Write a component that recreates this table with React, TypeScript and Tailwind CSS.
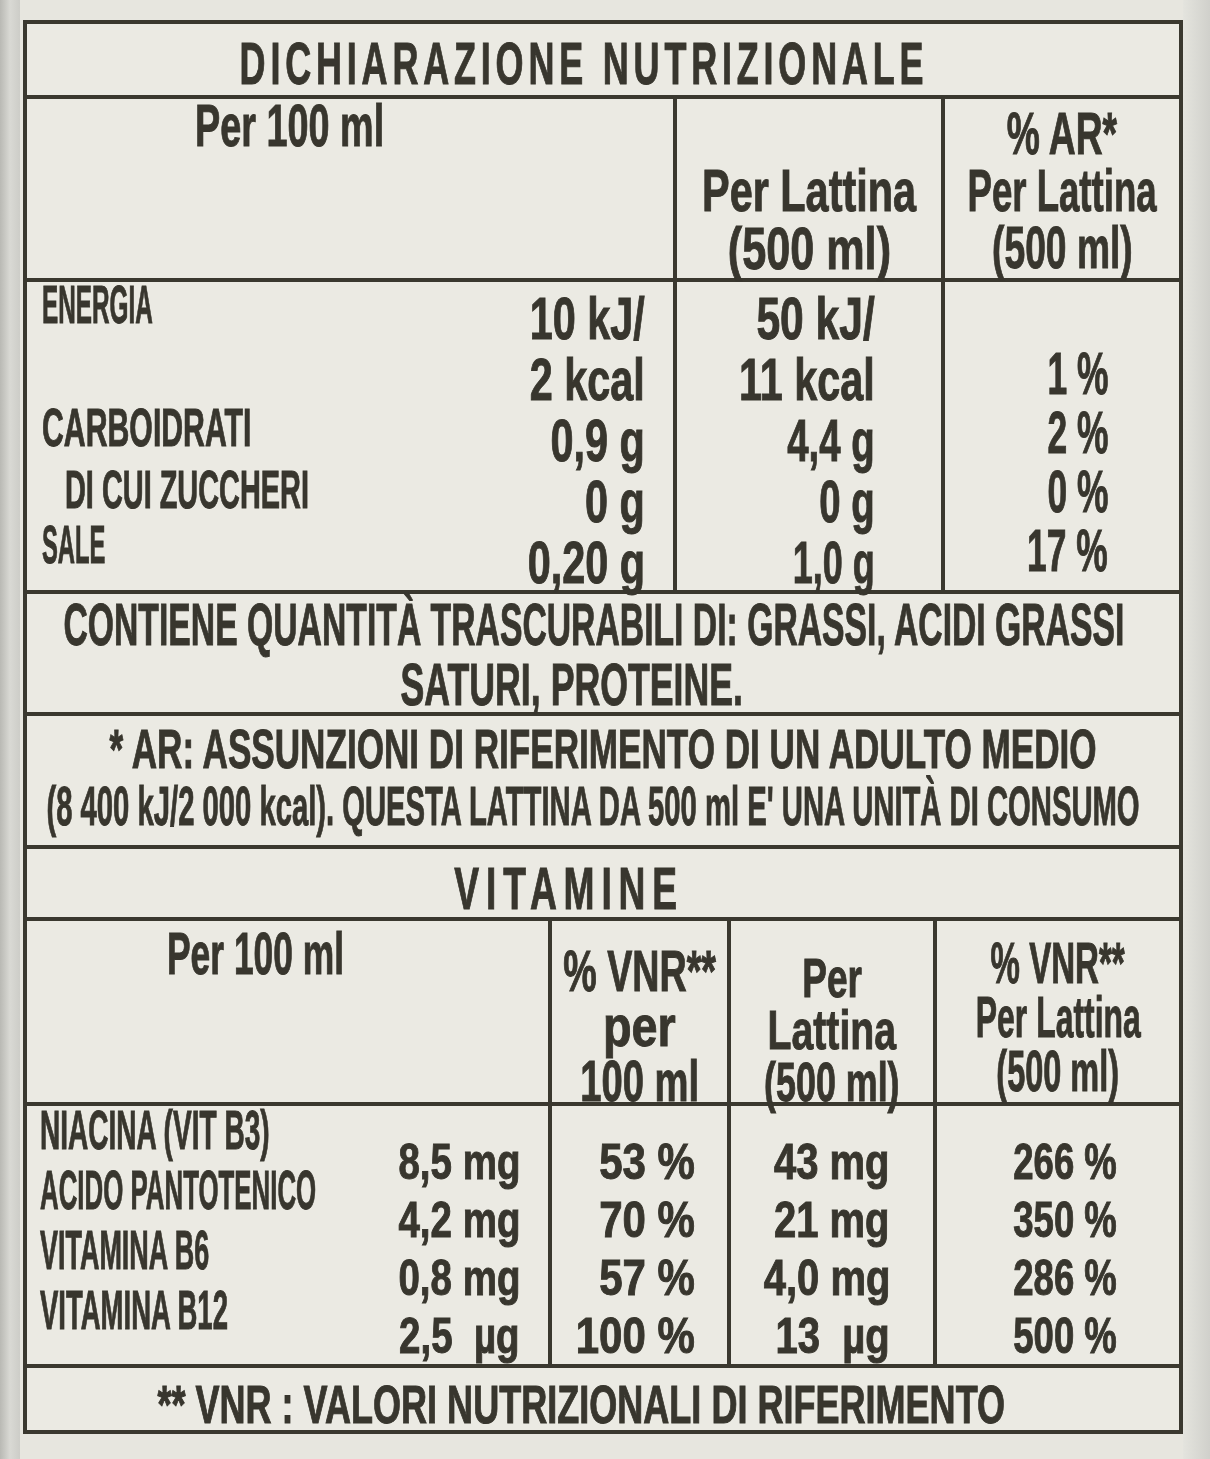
import React from "react";

const B = "border-[#3a382f]";

function S({ k = "", children }: { k?: string; children: React.ReactNode }) {
  return <span className={`block whitespace-pre ${k}`}>{children}</span>;
}

export default function App() {
  return (
    <div className="w-[1210px] h-[1459px] flex overflow-hidden bg-[#e7e6df] font-['Liberation_Sans',Arial,sans-serif] font-bold text-[#38362e] [-webkit-text-stroke:1px_#38362e]">
      {/* can edge */}
      <div className="w-[20px] shrink-0 bg-gradient-to-r from-[#b9b9b4] via-[#d9d9d4] to-[#cdcdc8]" />
      <div className="w-[3px] shrink-0" />

      <div className="w-[1160px] shrink-0 pt-[20px]">
        <div className={`border-4 ${B} bg-[#ebeae3] flex flex-col blur-[0.4px]`}>
          {/* title */}
          <div className={`h-[75px] border-b-4 ${B} flex flex-col items-center pt-[10px] pr-[38px] text-[60px] leading-[60px]`}>
            <S k="scale-x-[0.6] tracking-[8px]">DICHIARAZIONE NUTRIZIONALE</S>
          </div>

          {/* header */}
          <div className={`h-[183px] border-b-4 ${B} flex`}>
            <div className={`w-[650px] shrink-0 border-r-4 ${B} flex flex-col items-start pt-[3px] pl-[168px] text-[60px] leading-[48px]`}>
              <S k="scale-x-[0.63] origin-left">Per 100 ml</S>
            </div>
            <div className={`w-[268px] shrink-0 border-r-4 ${B} flex flex-col items-center pt-[63px] text-[60px] leading-[58px]`}>
              <S k="scale-x-[0.69]">Per Lattina</S>
              <S k="scale-x-[0.72]">(500 ml)</S>
            </div>
            <div className="flex-1 min-w-0 flex flex-col items-center pt-[6px] text-[60px] leading-[57px]">
              <S k="scale-x-[0.62]">% AR*</S>
              <S k="scale-x-[0.61]">Per Lattina</S>
              <S k="scale-x-[0.62]">(500 ml)</S>
            </div>
          </div>

          {/* nutrients */}
          <div className={`h-[312px] border-b-4 ${B} flex`}>
            <div className={`w-[650px] shrink-0 border-r-4 ${B} flex`}>
              <div className="flex-1 min-w-0 flex flex-col items-start pl-[15px] text-[54px] leading-[44px]">
                <S k="mt-[0px] scale-x-[0.45] origin-left">ENERGIA</S>
                <S k="mt-[79px] scale-x-[0.56] origin-left">CARBOIDRATI</S>
                <S k="mt-[18px] ml-[23px] scale-x-[0.535] origin-left">DI CUI ZUCCHERI</S>
                <S k="mt-[11px] scale-x-[0.44] origin-left">SALE</S>
              </div>
              <div className="shrink-0 flex flex-col items-end pt-[6px] pr-[28px] text-[60px] leading-[61px]">
                <S k="scale-x-[0.69] origin-right">10 kJ/</S>
                <S k="scale-x-[0.69] origin-right">2 kcal</S>
                <S k="scale-x-[0.69] origin-right">0,9 g</S>
                <S k="scale-x-[0.69] origin-right">0 g</S>
                <S k="scale-x-[0.69] origin-right">0,20 g</S>
              </div>
            </div>
            <div className={`w-[268px] shrink-0 border-r-4 ${B} flex flex-col items-end pt-[6px] pr-[66px] text-[60px] leading-[61px]`}>
              <S k="scale-x-[0.71] origin-right">50 kJ/</S>
              <S k="scale-x-[0.69] origin-right">11 kcal</S>
              <S k="scale-x-[0.64] origin-right">4,4 g</S>
              <S k="scale-x-[0.64] origin-right">0 g</S>
              <S k="scale-x-[0.6] origin-right">1,0 g</S>
            </div>
            <div className="flex-1 min-w-0 flex flex-col items-end pt-[62px] pr-[71px] text-[60px] leading-[59px]">
              <S k="scale-x-[0.59] origin-right">1 %</S>
              <S k="scale-x-[0.59] origin-right">2 %</S>
              <S k="scale-x-[0.59] origin-right">0 %</S>
              <S k="scale-x-[0.59] origin-right">17 %</S>
            </div>
          </div>

          {/* negligible */}
          <div className={`h-[122px] border-b-4 ${B} flex flex-col pt-[1px] text-[60px] leading-[60px]`}>
            <div className="flex justify-center pr-[19px]">
              <S k="scale-x-[0.562]">CONTIENE QUANTITÀ TRASCURABILI DI: GRASSI, ACIDI GRASSI</S>
            </div>
            <div className="flex justify-center pr-[62px]">
              <S k="scale-x-[0.595]">SATURI, PROTEINE.</S>
            </div>
          </div>

          {/* AR note */}
          <div className={`h-[133px] border-b-4 ${B} flex flex-col pt-[4px] text-[56px] leading-[57px]`}>
            <div className="flex justify-center">
              <S k="scale-x-[0.627]">* AR: ASSUNZIONI DI RIFERIMENTO DI UN ADULTO MEDIO</S>
            </div>
            <div className="flex justify-center pr-[19px]">
              <S k="scale-x-[0.522]">(8 400 kJ/2 000 kcal). QUESTA LATTINA DA 500 ml E' UNA UNITÀ DI CONSUMO</S>
            </div>
          </div>

          {/* vitamins title */}
          <div className={`h-[72px] border-b-4 ${B} flex flex-col items-center pt-[10px] pr-[68px] text-[60px] leading-[60px]`}>
            <S k="scale-x-[0.62] tracking-[11px]">VITAMINE</S>
          </div>

          {/* vitamins header */}
          <div className={`h-[185px] border-b-4 ${B} flex`}>
            <div className={`w-[525px] shrink-0 border-r-4 ${B} flex flex-col items-start pt-[9px] pl-[140px] text-[60px] leading-[48px]`}>
              <S k="scale-x-[0.59] origin-left">Per 100 ml</S>
            </div>
            <div className={`w-[179px] shrink-0 border-r-4 ${B} flex flex-col items-center pt-[23px] text-[57px] leading-[55px]`}>
              <S k="scale-x-[0.66]">% VNR**</S>
              <S k="scale-x-[0.82]">per</S>
              <S k="scale-x-[0.67]">100 ml</S>
            </div>
            <div className={`w-[206px] shrink-0 border-r-4 ${B} flex flex-col items-center pt-[31px] text-[56px] leading-[52px]`}>
              <S k="scale-x-[0.66]">Per</S>
              <S k="scale-x-[0.7]">Lattina</S>
              <S k="scale-x-[0.64]">(500 ml)</S>
            </div>
            <div className="flex-1 min-w-0 flex flex-col items-center pt-[15px] text-[57px] leading-[54px]">
              <S k="scale-x-[0.58]">% VNR**</S>
              <S k="scale-x-[0.56]">Per Lattina</S>
              <S k="scale-x-[0.57]">(500 ml)</S>
            </div>
          </div>

          {/* vitamins rows */}
          <div className={`h-[262px] border-b-4 ${B} flex`}>
            <div className={`w-[525px] shrink-0 border-r-4 ${B} flex`}>
              <div className="flex-1 min-w-0 flex flex-col items-start pl-[13px] text-[55px] leading-[60px]">
                <S k="-mt-[6px] scale-x-[0.51] origin-left">NIACINA (VIT B3)</S>
                <S k="scale-x-[0.47] origin-left">ACIDO PANTOTENICO</S>
                <S k="scale-x-[0.49] origin-left">VITAMINA B6</S>
                <S k="scale-x-[0.5] origin-left">VITAMINA B12</S>
              </div>
              <div className="shrink-0 flex flex-col items-end pt-[27px] pr-[28px] text-[50px] leading-[58px]">
                <S k="scale-x-[0.77] origin-right">8,5 mg</S>
                <S k="scale-x-[0.77] origin-right">4,2 mg</S>
                <S k="scale-x-[0.77] origin-right">0,8 mg</S>
                <S k="scale-x-[0.77] origin-right">2,5  µg</S>
              </div>
            </div>
            <div className={`w-[179px] shrink-0 border-r-4 ${B} flex flex-col items-end pt-[27px] pr-[32px] text-[50px] leading-[58px]`}>
              <S k="scale-x-[0.84] origin-right">53 %</S>
              <S k="scale-x-[0.84] origin-right">70 %</S>
              <S k="scale-x-[0.84] origin-right">57 %</S>
              <S k="scale-x-[0.84] origin-right">100 %</S>
            </div>
            <div className={`w-[206px] shrink-0 border-r-4 ${B} flex flex-col items-end pt-[27px] pr-[43px] text-[50px] leading-[58px]`}>
              <S k="scale-x-[0.8] origin-right">43 mg</S>
              <S k="scale-x-[0.8] origin-right">21 mg</S>
              <S k="scale-x-[0.8] origin-right">4,0 mg</S>
              <S k="scale-x-[0.8] origin-right">13  µg</S>
            </div>
            <div className="flex-1 min-w-0 flex flex-col items-end pt-[27px] pr-[62px] text-[50px] leading-[58px]">
              <S k="scale-x-[0.73] origin-right">266 %</S>
              <S k="scale-x-[0.73] origin-right">350 %</S>
              <S k="scale-x-[0.73] origin-right">286 %</S>
              <S k="scale-x-[0.73] origin-right">500 %</S>
            </div>
          </div>

          {/* VNR note */}
          <div className="h-[62px] flex flex-col items-center pt-[10px] pr-[44px] text-[53px] leading-[53px]">
            <S k="scale-x-[0.68]">** VNR : VALORI NUTRIZIONALI DI RIFERIMENTO</S>
          </div>
        </div>
      </div>

      <div className="flex-1 bg-gradient-to-r from-[#e4e4de] to-[#d0d0cb]" />
    </div>
  );
}
